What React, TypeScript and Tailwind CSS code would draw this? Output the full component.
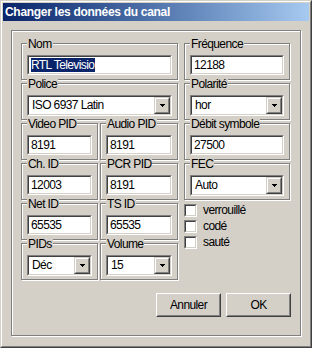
import React from "react";

const sunkenOuter = "border border-t-[#808080] border-l-[#808080] border-r-white border-b-white";
const sunkenInner = "border border-t-[#404040] border-l-[#404040] border-r-[#d4d0c8] border-b-[#d4d0c8]";

function Group({ label, className = "", children }: { label: string; className?: string; children?: React.ReactNode }) {
  return (
    <div
      className={`relative h-[37px] border border-[#808080] shadow-[inset_1px_1px_0_#fff,1px_1px_0_#fff] pt-[11px] px-[5px] ${className}`}
    >
      <span className="absolute left-[5px] -top-[6px] px-[1px] leading-[13px] bg-[#d4d0c8] whitespace-nowrap">
        {label}
      </span>
      {children}
    </div>
  );
}

function TextBox({ value, selected }: { value: string; selected?: boolean }) {
  return (
    <div className={`h-[20px] ${sunkenOuter}`}>
      <div className={`h-full bg-white pl-[2px] leading-[16px] whitespace-nowrap overflow-hidden ${sunkenInner}`}>
        {selected ? <span className="bg-[#0a246a] text-white pr-[1px]">{value}</span> : value}
      </div>
    </div>
  );
}

function ComboBox({ value }: { value: string }) {
  return (
    <div className={`h-[21px] ${sunkenOuter}`}>
      <div className={`h-full bg-white flex ${sunkenInner}`}>
        <span className="flex-1 pl-[3px] leading-[17px] whitespace-nowrap">{value}</span>
        <div className="w-[16px] h-full border border-t-[#d4d0c8] border-l-[#d4d0c8] border-r-[#404040] border-b-[#404040]">
          <div className="h-full flex items-center justify-center bg-[#d4d0c8] border border-t-white border-l-white border-r-[#808080] border-b-[#808080]">
            <svg width="5" height="3" viewBox="0 0 5 3" shapeRendering="crispEdges">
              <polygon points="0,0 5,0 2.5,3" fill="#000" />
            </svg>
          </div>
        </div>
      </div>
    </div>
  );
}

function CheckBox({ label }: { label: string }) {
  return (
    <div className="flex items-center h-[13px] gap-[6px]">
      <div className={`w-[13px] h-[13px] ${sunkenOuter}`}>
        <div className={`h-full bg-white ${sunkenInner}`} />
      </div>
      <span className="leading-[13px]">{label}</span>
    </div>
  );
}

function Button({ label }: { label: string }) {
  return (
    <div className="w-[65px] h-[24px] border border-t-white border-l-white border-r-[#404040] border-b-[#404040]">
      <div className="h-full flex items-center justify-center border border-t-[#d4d0c8] border-l-[#d4d0c8] border-r-[#808080] border-b-[#808080]">
        {label}
      </div>
    </div>
  );
}

export default function App() {
  return (
    <div className="w-[312px] h-[348px] bg-[#d4d0c8] text-black text-[12px] tracking-[-0.6px] font-['Liberation_Sans',Arial,sans-serif] border border-t-[#d4d0c8] border-l-[#d4d0c8] border-r-[#404040] border-b-[#404040]">
      <div className="h-full border border-t-white border-l-white border-r-[#808080] border-b-[#808080] p-[1px]">
        <div className="h-[18px] flex items-center pl-[2px] bg-gradient-to-r from-[#0a246a] to-[#a6caf0] text-white font-bold tracking-[-0.3px]">
          Changer les données du canal
        </div>

        <div className="ml-[8px] mt-[9px] w-[290px] h-[306px] border border-[#808080] shadow-[inset_1px_1px_0_#fff,1px_1px_0_#fff] pl-[9px] pt-[12px]">
          <div className="flex gap-[6px]">
            <div className="w-[157px] flex flex-col gap-[3px]">
              <Group label="Nom">
                <TextBox value="RTL Televisio" selected />
              </Group>
              <Group label="Police">
                <ComboBox value="ISO 6937 Latin" />
              </Group>
              <div className="flex gap-[2px]">
                <Group label="Video PID" className="w-[77px]">
                  <TextBox value="8191" />
                </Group>
                <Group label="Audio PID" className="w-[78px]">
                  <TextBox value="8191" />
                </Group>
              </div>
              <div className="flex gap-[2px]">
                <Group label="Ch. ID" className="w-[77px]">
                  <TextBox value="12003" />
                </Group>
                <Group label="PCR PID" className="w-[78px]">
                  <TextBox value="8191" />
                </Group>
              </div>
              <div className="flex gap-[2px]">
                <Group label="Net ID" className="w-[77px]">
                  <TextBox value="65535" />
                </Group>
                <Group label="TS ID" className="w-[78px]">
                  <TextBox value="65535" />
                </Group>
              </div>
              <div className="flex gap-[2px]">
                <Group label="PIDs" className="w-[77px]">
                  <ComboBox value="Déc" />
                </Group>
                <Group label="Volume" className="w-[78px]">
                  <ComboBox value="15" />
                </Group>
              </div>
            </div>

            <div className="w-[106px] flex flex-col gap-[3px]">
              <Group label="Fréquence">
                <TextBox value="12188" />
              </Group>
              <Group label="Polarité">
                <ComboBox value="hor" />
              </Group>
              <Group label="Débit symbole">
                <TextBox value="27500" />
              </Group>
              <Group label="FEC">
                <ComboBox value="Auto" />
              </Group>
              <div className="pt-[1px] flex flex-col gap-[3px]">
                <CheckBox label="verrouillé" />
                <CheckBox label="codé" />
                <CheckBox label="sauté" />
              </div>
            </div>
          </div>

          <div className="w-[270px] mt-[13px] flex justify-end gap-[5px]">
            <Button label="Annuler" />
            <Button label="OK" />
          </div>
        </div>
      </div>
    </div>
  );
}
